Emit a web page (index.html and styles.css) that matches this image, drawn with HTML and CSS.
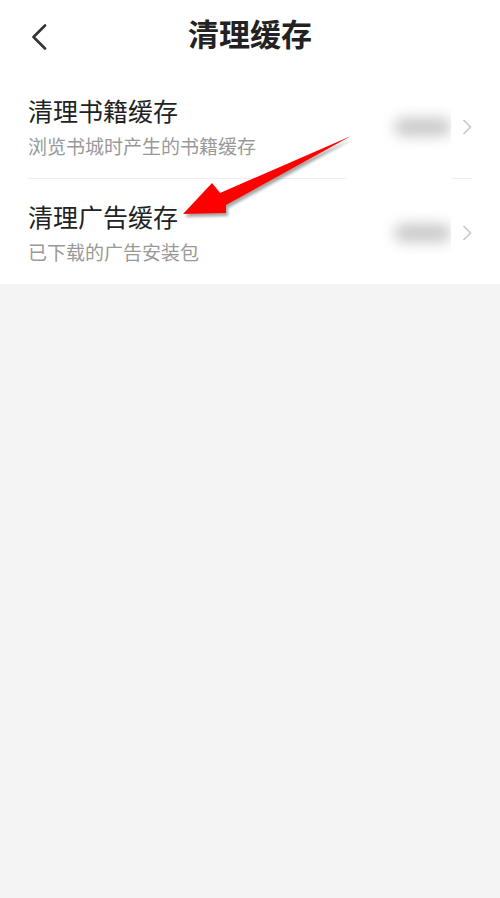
FILE: index.html
```html
<!DOCTYPE html>
<html lang="zh-CN">
<head>
<meta charset="utf-8">
<title>清理缓存</title>
<link rel="stylesheet" href="styles.css">
</head>
<body>
<div class="page">
  <header class="header">
    <svg class="back" width="16" height="26" viewBox="0 0 16 26"><path d="M14 1.5 L2.5 13 L14 24.5" fill="none" stroke="#333" stroke-width="2.6" stroke-linecap="round" stroke-linejoin="round"/></svg>
    <h1 class="title">清理缓存</h1>
  </header>
  <section class="list">
    <div class="row">
      <div class="texts">
        <div class="row-title">清理书籍缓存</div>
        <div class="row-sub">浏览书城时产生的书籍缓存</div>
      </div>
      <div class="size"><span class="blur"></span></div>
      <svg class="chev" width="10" height="16" viewBox="0 0 10 16"><path d="M1.5 1 L8.5 8 L1.5 15" fill="none" stroke="#c8c8c8" stroke-width="1.6"/></svg>
    </div>
    <div class="divider"></div>
    <div class="row">
      <div class="texts">
        <div class="row-title">清理广告缓存</div>
        <div class="row-sub">已下载的广告安装包</div>
      </div>
      <div class="size"><span class="blur"></span></div>
      <svg class="chev" width="10" height="16" viewBox="0 0 10 16"><path d="M1.5 1 L8.5 8 L1.5 15" fill="none" stroke="#c8c8c8" stroke-width="1.6"/></svg>
    </div>
  </section>
  <svg class="arrow" width="500" height="300" viewBox="0 0 500 300">
    <defs>
      <filter id="sh" x="-20%" y="-20%" width="140%" height="140%">
        <feGaussianBlur stdDeviation="1.5"/>
      </filter>
    </defs>
    <rect x="346" y="176" width="106" height="4" fill="#fff"/>
    <polygon points="185,217 214,186 222,196 353,139 228,208 228,216" fill="#000" opacity="0.35" filter="url(#sh)"/>
    <polygon points="183,214 212,183 220,193 351,136 226,205 226,213" fill="#f00"/>
  </svg>
</div>
</body>
</html>
```
FILE: styles.css
```css
html, body {
  margin: 0;
  padding: 0;
  background: #f4f4f4;
}
.page {
  position: relative;
  width: 500px;
  min-height: 898px;
  background: #f4f4f4;
  font-family: "Noto Sans CJK SC", "Noto Sans", sans-serif;
}
.header {
  height: 73px;
  background: #fff;
  display: flex;
  align-items: center;
  justify-content: center;
  position: relative;
}
.back {
  position: absolute;
  left: 31px;
  top: 24px;
}
.title {
  margin: 0;
  font-size: 31px;
  font-weight: 700;
  color: #222;
  line-height: 40px;
  margin-top: -7px;
}
.list {
  background: #fff;
  padding: 0 28px;
}
.row {
  display: flex;
  align-items: center;
  padding: 21px 0 19px;
}
.texts {
  flex: 1;
}
.row-title {
  font-size: 25px;
  line-height: 32px;
  color: #222;
}
.row-sub {
  margin-top: 7px;
  font-size: 19px;
  line-height: 26px;
  color: #999;
}
.size {
  width: 69px;
  height: 44px;
  margin-right: 11px;
  display: flex;
  align-items: center;
  justify-content: center;
  overflow: hidden;
  background: #fff;
}
.blur {
  display: block;
  width: 58px;
  height: 18px;
  margin-left: 12px;
  border-radius: 9px;
  background: #c8c8c8;
  filter: blur(7px);
}
.chev {
  display: block;
}
.divider {
  height: 1px;
  background: #efefef;
}
.arrow {
  position: absolute;
  left: 0;
  top: 0;
  pointer-events: none;
}
```
